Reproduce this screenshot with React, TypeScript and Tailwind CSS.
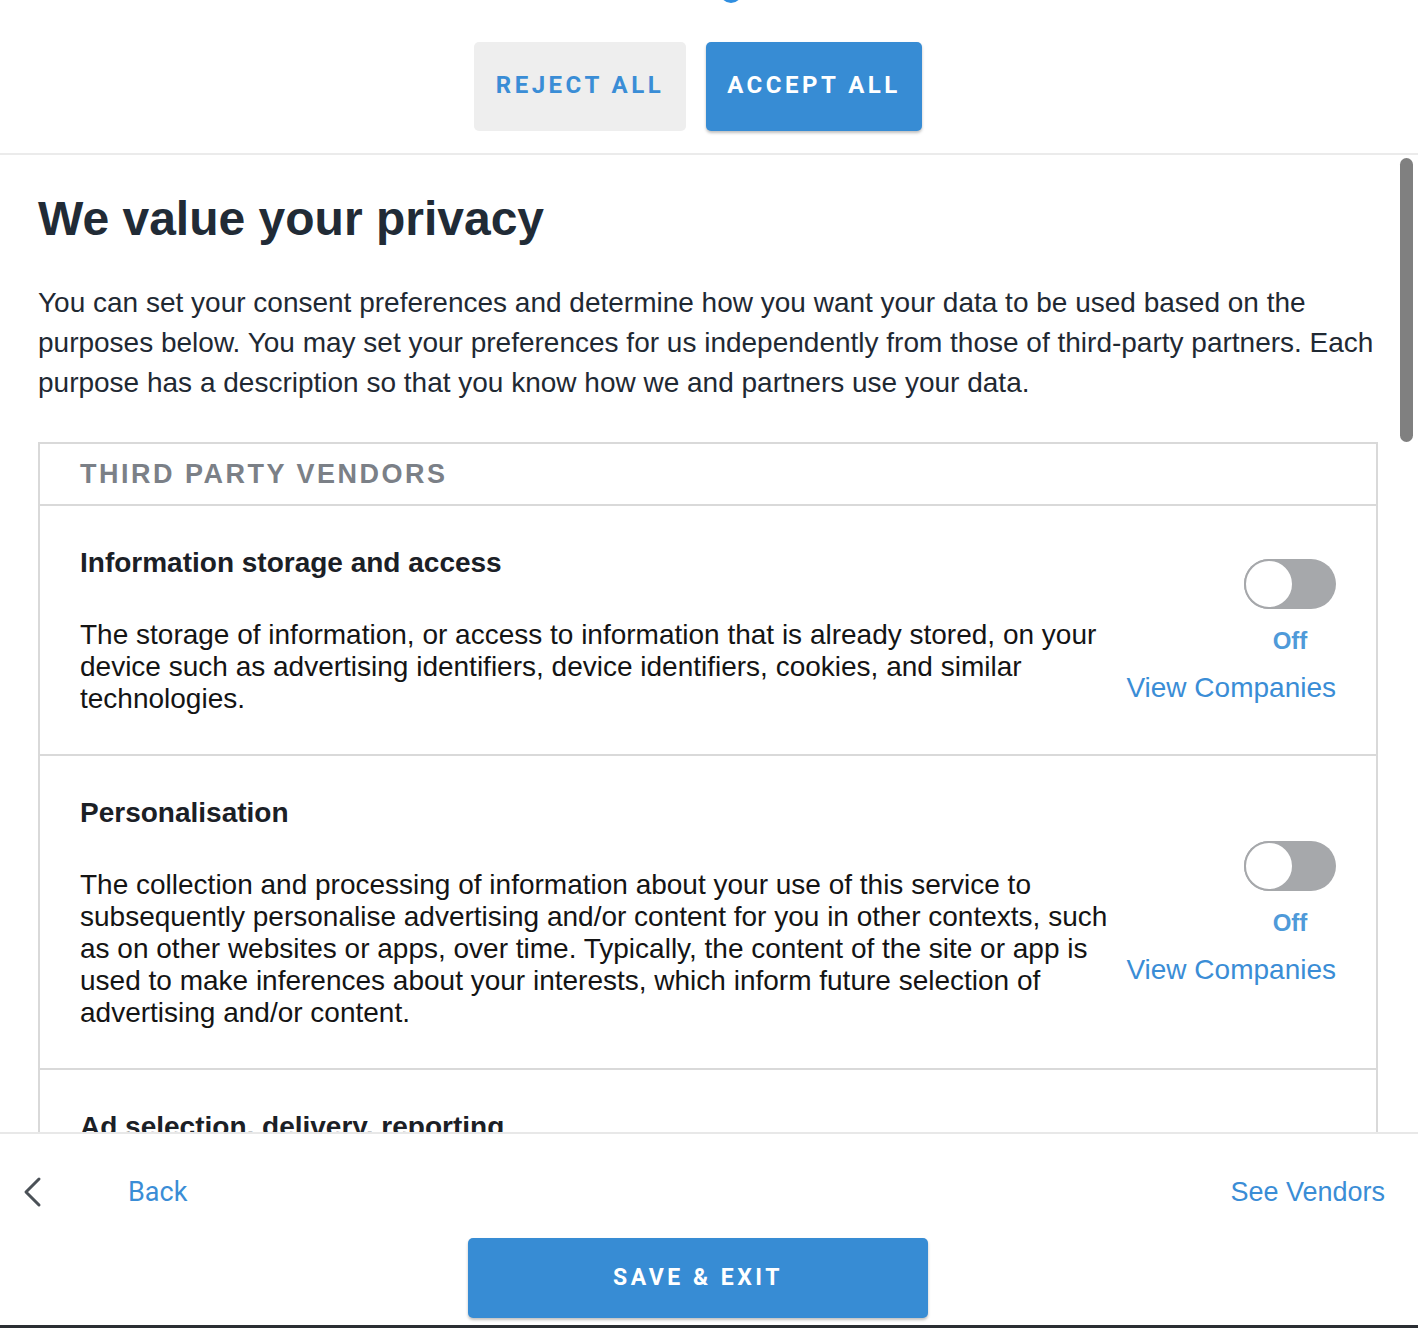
import React from "react";

function Toggle() {
  return (
    <div className="w-[92px] h-[50px] rounded-full bg-[#a6a8ab] relative">
      <div className="absolute left-0 top-0 w-[50px] h-[50px] rounded-full bg-white border-2 border-[#a6a8ab]" />
    </div>
  );
}

function Item({ title, lines }: { title: string; lines: string[] }) {
  return (
    <div className="flex items-center justify-between pl-[40px] pr-[40px] pt-[41px] pb-[39px] border-t-2 border-[#d9d9d9]">
      <div className="flex flex-col min-w-0">
        <div className="font-bold text-[28px] leading-[32px] text-[#1b2026] whitespace-nowrap">
          {title}
        </div>
        <div className="mt-[40px] text-[28px] leading-[32px] text-[#141414] whitespace-nowrap">
          {lines.map((l, i) => (
            <div key={i}>{l}</div>
          ))}
        </div>
      </div>
      <div className="flex flex-col items-end shrink-0">
        <Toggle />
        <div className="w-[92px] text-center mt-[18px] text-[24px] leading-[28px] font-bold text-[#4f9ad9]">
          Off
        </div>
        <div className="mt-[17px] text-[28px] leading-[32px] text-[#3a8dd6] whitespace-nowrap">
          View Companies
        </div>
      </div>
    </div>
  );
}

export default function App() {
  return (
    <div className="w-[1418px] h-[1328px] bg-white flex flex-col overflow-hidden relative font-['Liberation_Sans',Arial,sans-serif]">
      {/* Header */}
      <div className="relative h-[155px] shrink-0 border-b-2 border-[#ebebeb] flex justify-center items-start pt-[42px] pr-[22px] gap-[20px]">
        <div className="absolute left-[720px] top-[-19px] w-[22px] h-[22px] rounded-full bg-[#2f8ee0]" />
        <button className="w-[212px] h-[89px] pb-[3px] rounded-[5px] bg-[#eeeeee] text-[#3a8dd6] text-[24px] font-bold tracking-[3.5px] font-['Roboto',sans-serif] flex items-center justify-center">
          REJECT ALL
        </button>
        <button className="w-[216px] h-[89px] pb-[3px] rounded-[5px] bg-[#378cd4] text-white text-[24px] font-bold tracking-[3.5px] font-['Roboto',sans-serif] flex items-center justify-center shadow-[0_2px_3px_rgba(0,0,0,0.25)]">
          ACCEPT ALL
        </button>
      </div>

      {/* Scrollable content */}
      <div className="relative h-[977px] shrink-0 overflow-hidden pl-[38px] pr-[40px] pt-[36px]">
        <h1 className="text-[48px] leading-[56px] font-bold text-[#212b36]">We value your privacy</h1>
        <p className="mt-[36px] text-[28px] leading-[40px] text-[#1f2933] whitespace-nowrap">
          You can set your consent preferences and determine how you want your data to be used based on the
          <br />
          purposes below. You may set your preferences for us independently from those of third-party partners. Each
          <br />
          purpose has a description so that you know how we and partners use your data.
        </p>
        <div className="mt-[39px] border-2 border-[#d9d9d9]">
          <div className="h-[60px] flex items-center pl-[40px]">
            <span className="text-[27px] font-bold tracking-[2.5px] text-[#7b8087]">THIRD PARTY VENDORS</span>
          </div>
          <Item
            title="Information storage and access"
            lines={[
              "The storage of information, or access to information that is already stored, on your",
              "device such as advertising identifiers, device identifiers, cookies, and similar",
              "technologies.",
            ]}
          />
          <Item
            title="Personalisation"
            lines={[
              "The collection and processing of information about your use of this service to",
              "subsequently personalise advertising and/or content for you in other contexts, such",
              "as on other websites or apps, over time. Typically, the content of the site or app is",
              "used to make inferences about your interests, which inform future selection of",
              "advertising and/or content.",
            ]}
          />
          <Item
            title="Ad selection, delivery, reporting"
            lines={[
              "The collection of information, and combination with previously collected",
              "information, to select and deliver advertisements for you, and to measure the",
              "delivery and effectiveness of such advertisements. This includes using previously",
              "collected information about your interests to select ads, processing data about",
              "what advertisements were shown, how often they were shown, when and where",
              "they were shown, and whether you took any action related to the advertisement,",
              "including for example clicking an ad or making a purchase. This does not include",
              "personalisation, which is the collection and processing of information about your",
              "use of this service to subsequently personalise advertising and/or content for you",
              "in other contexts, such as websites or apps, over time.",
            ]}
          />
        </div>
        <div className="absolute right-[5px] top-[3px] w-[13px] h-[284px] rounded-full bg-[#808080]" />
      </div>

      {/* Footer */}
      <div className="shrink-0 border-t-2 border-[#e8e8e8] flex flex-col">
        <div className="mt-[28px] h-[60px] flex items-center justify-between pl-[22px] pr-[33px]">
          <div className="flex items-center">
            <svg width="20" height="32" viewBox="0 0 20 32" fill="none">
              <path d="M17 3 L4 16 L17 29" stroke="#4b5157" strokeWidth="3" strokeLinecap="round" strokeLinejoin="round" />
            </svg>
            <span className="ml-[86px] font-['Roboto',sans-serif] text-[27px] leading-[32px] text-[#3a8dd6]">Back</span>
          </div>
          <span className="text-[27px] leading-[32px] text-[#3a8dd6]">See Vendors</span>
        </div>
        <div className="mt-[16px] flex justify-center pr-[22px]">
          <button className="w-[460px] h-[80px] rounded-[5px] bg-[#378cd4] text-white text-[23px] font-bold tracking-[3.5px] font-['Roboto',sans-serif] flex items-center justify-center shadow-[0_2px_3px_rgba(0,0,0,0.25)]">
            SAVE &amp; EXIT
          </button>
        </div>
        <div className="h-[7px]" />
      </div>
      <div className="h-[3px] bg-[#2a2e33] shrink-0" />
    </div>
  );
}
